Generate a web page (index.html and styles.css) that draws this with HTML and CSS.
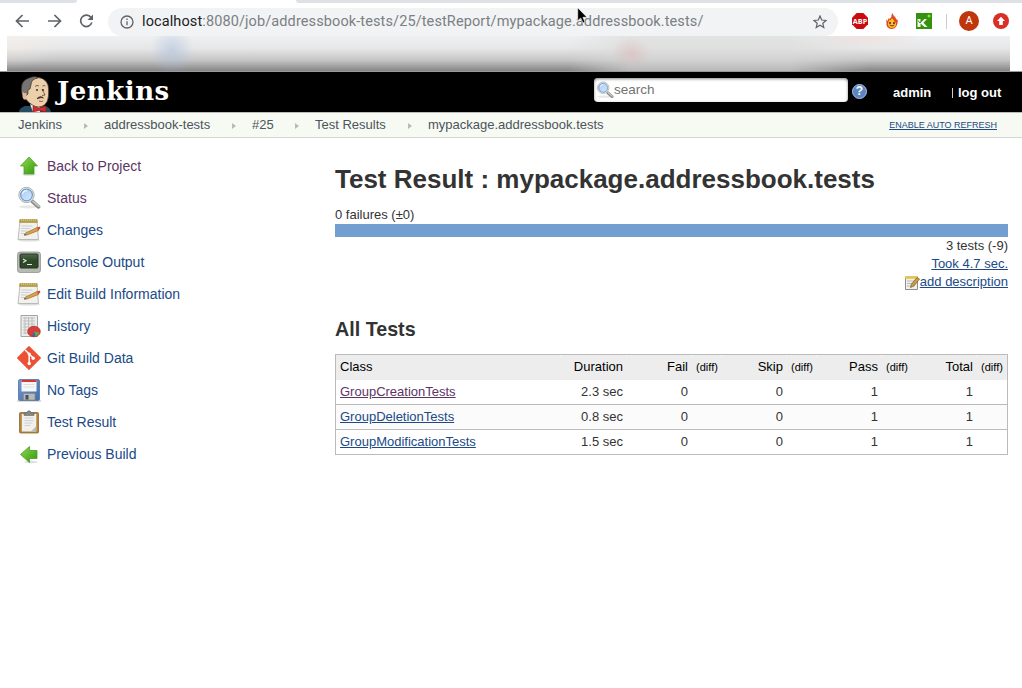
FILE: index.html
```html
<!DOCTYPE html>
<html lang="en">
<head>
<meta charset="utf-8">
<title>mypackage.addressbook.tests [Jenkins]</title>
<link rel="stylesheet" href="styles.css">
</head>
<body>
<svg class="defs" width="0" height="0" aria-hidden="true">
  <defs>
    <linearGradient id="green" x1="0" y1="0" x2="1" y2="1"><stop offset="0" stop-color="#8fdd4f"/><stop offset="1" stop-color="#35940f"/></linearGradient>
    <linearGradient id="lens" x1="0" y1="0" x2="1" y2="1"><stop offset="0" stop-color="#a5c9f2"/><stop offset="1" stop-color="#d9e9fb"/></linearGradient>
    <linearGradient id="screen" x1="0" y1="0" x2="0" y2="1"><stop offset="0" stop-color="#51694b"/><stop offset=".5" stop-color="#2c4629"/><stop offset="1" stop-color="#2d4a28"/></linearGradient>
    <linearGradient id="disk" x1="0" y1="0" x2="1" y2="1"><stop offset="0" stop-color="#7198d3"/><stop offset="1" stop-color="#426fae"/></linearGradient>
    <symbol id="notepad" viewBox="0 0 24 24">
      <ellipse cx="12" cy="22.300" rx="11" ry="1.300" fill="#ddd"/>
      <path d="M3 3h17l1.500 18.500H1z" fill="#f1f1ee" stroke="#a3a39f" stroke-width=".7"/>
      <path d="M2.700 1.500h17.500v3H2.700z" fill="#b8a044" stroke="#958032" stroke-width=".5"/>
      <path d="M4 2.200h16" stroke="#e1d07c" stroke-dasharray="1 1"/>
      <path d="M4.500 8h11M4.300 10.500h9M4 13h7M4 15.500h4" stroke="#c6c6c4" stroke-width=".8"/>
      <path d="M8.500 15l11.500-5.500 1.500 3-11.500 4.500-2.500.3z" fill="#d9a14c" stroke="#8d6329" stroke-width=".6"/>
      <path d="M20 9.500l2.500-1 1 1.500-2 2.500z" fill="#d54d36"/>
      <path d="M7 17.300l.9-1.400 1.100 1.200z" fill="#333"/>
    </symbol>
    <symbol id="magnifier" viewBox="0 0 24 24">
      <ellipse cx="11" cy="20.800" rx="9" ry="1.600" fill="#e8e8e8"/>
      <path d="M15.500 15.500l6 5.300" stroke="#8b8d8a" stroke-width="3.800" stroke-linecap="round"/>
      <path d="M16 15.300l6 5" stroke="#c9cbc8" stroke-width="1.500" stroke-linecap="round"/>
      <circle cx="9.500" cy="9" r="7.700" fill="#e9e9e7" stroke="#b1b3af"/>
      <circle cx="9.500" cy="9" r="5.900" fill="url(#lens)" stroke="#729bd0" stroke-width="1.200"/>
      <path d="M5.500 8q1-3.500 4.500-3.500" fill="none" stroke="#e9f3ff" stroke-width="1.300"/>
    </symbol>
  </defs>
</svg>

<div class="tabs"><i class="tab-left"></i><i class="tab-right"></i></div>
<div class="toolbar">
  <svg class="nav" viewBox="0 0 112 33" fill="none" stroke="#5f6368" stroke-width="1.700">
    <path d="M29 18H17M22.500 12l-6 6 6 6M48 18h12M54.500 12l6 6-6 6"/>
    <path d="M91 14.500a5.700 5.700 0 1 0 .8 5"/><path d="M93 11.500v5.500h-5.500z" fill="#5f6368" stroke="none"/>
  </svg>
  <div class="address">
    <svg class="info" viewBox="0 0 14 14" fill="none" stroke="#5f6368" stroke-width="1.300"><circle cx="7" cy="7" r="6"/><path d="M7 6.300v4M7 3.500V5"/></svg>
    <span class="url"><b>localhost</b>:8080/job/addressbook-tests/25/testReport/mypackage.addressbook.tests/</span>
    <svg class="star" viewBox="0 0 14 14" fill="none" stroke="#5f6368" stroke-width="1.200"><path d="M7 1l1.700 4 4.400.4-3.300 2.900 1 4.300L7 10.300l-3.800 2.300 1-4.300L.9 5.400 5.300 5z"/></svg>
  </div>
  <div class="extensions">
    <svg class="ext abp" viewBox="0 0 16 16"><path d="M4.700 0h6.600L16 4.700v6.600L11.300 16H4.700L0 11.300V4.700z" fill="#c90d0d"/><text x="8" y="10.700" class="abp-text">ABP</text></svg>
    <svg class="ext flame" viewBox="0 0 16 16"><path d="M8 0q2 2 2 4l1-1q0 2 2 4l.8-.4Q14 15.500 8 16 1.500 15.500 2.500 9L2 6.500 4 8q-.3-2 1-3l.5 1.200Q8 4 8 0z" fill="#de481d"/><path d="M4 10l1.500-3.500 1 1L8 5l3 4 1 1q.5 4.500-4 5-4.500-.5-4-5z" fill="#ffbd2b"/><circle cx="6" cy="10" r="1" fill="#622"/><circle cx="10" cy="10" r="1" fill="#622"/><path d="M5.700 12q2.300 2 4.600 0" fill="none" stroke="#723018"/></svg>
    <svg class="ext katalon" viewBox="0 0 16 16"><path fill="#36910f" d="M0 0h16v16H0z"/><path d="M1.500 6h3v3.500L8.500 6H11L7.500 9.700 11.500 14h-3l-4-3.500V14h-3z" fill="#f5faef"/><path d="M2 7.500l2 2.500 4-5" stroke="#36910f" fill="none"/><circle cx="13" cy="3" r="1.500" fill="#7dec2a"/></svg>
    <i class="divider"></i>
    <span class="avatar">A</span>
    <svg class="update" viewBox="0 0 16 16"><circle cx="8" cy="8" r="8" fill="#d92f25"/><path d="M8 3.800l4 4.200H9.800v4H6.200V8H4z" fill="#fff"/></svg>
  </div>
  <svg class="cursor" viewBox="0 0 10 17"><path d="M.7.700v13l3-2.700 2.300 5 2-1-2.100-4.700H10z" fill="#000" stroke="#fff" stroke-width=".6"/></svg>
</div>
<div class="bookmarks"></div>

<header class="header">
  <svg class="butler" viewBox="0 0 36 36">
    <path d="M1 36q0-4 6-6l20 0q5 1 6 6z" fill="#294b60"/>
    <path d="M12 28l10 3v5h-7z" fill="#eee"/>
    <path d="M5 18Q2 4 14 1.500 27 0 30 9q1 4 .5 11-.5 6-4 9-6 4-12 0-7-4-9.500-11z" fill="#ecd0ac" stroke="#41342c" stroke-width=".7"/>
    <path d="M4 18Q1 5 11 2q7-3 9 0-7 1-7 7l-1 4-2 1v4l-2 2q-3 1-4-2z" fill="#77736e" stroke="#2b2827" stroke-width=".6"/>
    <path d="M4.500 15q1 3 4 2v6q-3 2-4-2z" fill="#e3bc95"/>
    <path d="M17 10.500q2-2 4-.5M24.500 10q2-1 3 0M24 13q2 4 3 6l-3 .5" fill="none" stroke="#5c4537" stroke-width=".8"/>
    <circle cx="19" cy="14" r=".9" fill="#222"/><circle cx="25" cy="14" r=".9" fill="#222"/>
    <path d="M19 22q3-3 6-1l1 1.500-3-.4-4 1.200z" fill="#4d3930"/><path d="M21 25q3 1 4 0" stroke="#9d4d42" fill="none"/>
    <path d="M15 30l6 2L28 30v6l-7-1.500L15 36z" fill="#d12b2a" stroke="#821b1c" stroke-width=".6"/>
  </svg>
  <span class="brand">Jenkins</span>
  <div class="search"><svg viewBox="0 0 24 24"><use href="#magnifier"/></svg><span>search</span></div>
  <span class="help">?</span>
  <span class="admin">admin</span>
  <span class="logout"><i></i>log out</span>
</header>
<nav class="breadcrumbs">
  <span class="c1">Jenkins</span><i></i><span class="c2">addressbook-tests</span><i></i><span class="c3">#25</span><i></i><span class="c4">Test Results</span><i></i><span class="c5">mypackage.addressbook.tests</span>
  <a class="refresh">ENABLE AUTO REFRESH</a>
</nav>
<div class="page">
  <aside class="tasks">
    <a class="visited"><svg viewBox="0 0 24 24"><ellipse cx="12" cy="20.500" rx="7" ry="1.300" fill="#ddd"/><path d="M12 3l8.500 9H17v8H7v-8H3.500z" fill="url(#green)" stroke="#49a327" stroke-width=".8"/></svg><span>Back to Project</span></a>
    <a class="visited"><svg viewBox="0 0 24 24"><use href="#magnifier"/></svg><span>Status</span></a>
    <a><svg viewBox="0 0 24 24"><use href="#notepad"/></svg><span>Changes</span></a>
    <a><svg viewBox="0 0 24 24"><rect x=".5" y="2" width="23" height="20.500" rx="2.500" fill="#b8bbb5" stroke="#92948f" stroke-width=".8"/><rect x="3" y="4" width="18" height="14" rx="1" fill="url(#screen)" stroke="#263422"/><path d="M6 9l3 1.700L6 12.400M10 14.500h5" fill="none" stroke="#e3eddb" stroke-width="1.100"/><path d="M16 20h2" stroke="#8ed151"/></svg><span>Console Output</span></a>
    <a><svg viewBox="0 0 24 24"><use href="#notepad"/></svg><span>Edit Build Information</span></a>
    <a><svg viewBox="0 0 24 24"><path d="M4 1.500h16.500v21H4z" fill="#ececea" stroke="#a4a4a1"/><path d="M6 4h12M6 7h12M6 10h12M6 13h12M6 16h12M6 19h12M8 3v17M11.500 3v17M15 3v17" stroke="#b6b6b4" stroke-width=".8"/><ellipse cx="17" cy="17.500" rx="6.300" ry="5.300" fill="#d93e3b" stroke="#a62729" stroke-width=".7"/><path d="M17 17.500l5.500 1q-1 3-4 4z" fill="#5fae3d"/><path d="M17 17.500l1.500 5q-2 .3-3.500-.3z" fill="#3d62b4"/></svg><span>History</span></a>
    <a><svg viewBox="0 0 24 24"><path d="M12 .7L23.300 12 12 23.300.7 12z" fill="#ed5135" stroke="#ed5135" stroke-width="1.300" stroke-linejoin="round"/><path d="M8.200 4l4 4v10M12.200 8l4 4" stroke="#fff" stroke-width="1.500" fill="none"/><circle cx="12.200" cy="8" r="1.600" fill="#fff"/><circle cx="12.200" cy="17.500" r="1.700" fill="#fff"/><circle cx="16.200" cy="12.200" r="1.700" fill="#fff"/></svg><span>Git Build Data</span></a>
    <a><svg viewBox="0 0 24 24"><path d="M0 22h24v2H0z" fill="#ddd"/><rect x="1.500" y="1.500" width="21" height="21" rx="1.500" fill="url(#disk)" stroke="#5272a0" stroke-width=".8"/><path d="M4.500 2h15v11.500h-15z" fill="#f7f7f7"/><path d="M4.500 2h15v2h-15z" fill="#d73731"/><path d="M6.500 6.500h11M6.500 9h11" stroke="#ddd"/><path d="M6.500 15.500H18V22H6.500z" fill="#b7bab6" stroke="#888" stroke-width=".7"/><path d="M8.500 17h3v4.500h-3z" fill="#49505c"/></svg><span>No Tags</span></a>
    <a><svg viewBox="0 0 24 24"><rect x="2.500" y="2.500" width="19" height="20.500" rx="1" fill="#b58339" stroke="#8c6930" stroke-width=".8"/><path d="M4.800 4h14.500v17.500H4.800z" fill="#f0f0ee"/><path d="M7.500 8h9M7.500 10.500h9M7.500 13h8M7.500 15.500h6" stroke="#c6c6c6" stroke-width=".8"/><path d="M14 21.500l5-5v5z" fill="#bababa"/><path d="M7 5.500V3h3q0-2.300 2-2.300T14 3h3v2.500z" fill="#858985" stroke="#646764" stroke-width=".6"/></svg><span>Test Result</span></a>
    <a><svg viewBox="0 0 24 24"><ellipse cx="14" cy="20" rx="7" ry="1.200" fill="#ddd"/><path d="M3.500 12.500l9-8v4H20v8h-7.500v4z" fill="url(#green)" stroke="#479d2b" stroke-width=".8"/></svg><span>Previous Build</span></a>
  </aside>
  <main>
    <h1>Test Result : mypackage.addressbook.tests</h1>
    <div class="failures">0 failures (±0)</div>
    <div class="bar"></div>
    <div class="summary"><div>3 tests (-9)</div><div><a>Took 4.7 sec.</a></div><div><svg viewBox="0 0 16 16"><path d="M1.500 2h12v12.500h-12z" fill="#efefeb" stroke="#8e8e87"/><path d="M1 1.300h13v2.500H1z" fill="#e8c34b"/><path d="M3 6h8M3 8.500h6M3 11h4" stroke="#bbb"/><path d="M6.500 12.500l1-3.500 5.500-6.500 2.500 1.500L10 11z" fill="#c99b46" stroke="#765c2c" stroke-width=".7"/></svg><a>add description</a></div></div>
    <h2>All Tests</h2>
    <table>
      <colgroup><col class="name"><col class="duration"><col class="count"><col class="diff"><col class="count"><col class="diff"><col class="count"><col class="diff"><col class="count"><col class="diff"></colgroup>
      <thead><tr><th>Class</th><th>Duration</th><th>Fail</th><th>(diff)</th><th>Skip</th><th>(diff)</th><th>Pass</th><th>(diff)</th><th>Total</th><th>(diff)</th></tr></thead>
      <tbody>
        <tr><td><a class="visited">GroupCreationTests</a></td><td>2.3 sec</td><td>0</td><td></td><td>0</td><td></td><td>1</td><td></td><td>1</td><td></td></tr>
        <tr><td><a>GroupDeletionTests</a></td><td>0.8 sec</td><td>0</td><td></td><td>0</td><td></td><td>1</td><td></td><td>1</td><td></td></tr>
        <tr><td><a>GroupModificationTests</a></td><td>1.5 sec</td><td>0</td><td></td><td>0</td><td></td><td>1</td><td></td><td>1</td><td></td></tr>
      </tbody>
    </table>
  </main>
</div>
</body>
</html>
```

FILE: styles.css
```css
* { box-sizing: border-box; }
body { margin: 0; width: 1022px; height: 688px; overflow: hidden; background: #fff; color: #333; font: 13px/18px "Liberation Sans", Arial, sans-serif; }
svg { display: block; flex: none; }
.defs { position: absolute; }
.tabs { height: 3px; display: flex; justify-content: space-between; background: #fff; }
.tabs i { background: #dee1e6; height: 3px; }
.tab-left { width: 77px; border-bottom-right-radius: 4px; }
.tab-right { width: 726px; border-bottom-left-radius: 4px; }
.toolbar { position: relative; height: 33px; display: flex; align-items: center; }
.nav { width: 112px; height: 33px; margin-right: -4px; }
.address { width: 730px; height: 28px; margin-top: 4px; border-radius: 14px; background: #f1f3f4; display: flex; align-items: center; padding: 0 11px 0 12px; }
.info { width: 14px; height: 14px; }
.url { margin-left: 8px; font: 14.500px/20px Roboto, sans-serif; letter-spacing: .11px; color: #7b8085; white-space: nowrap; }
.url b { font-weight: 400; color: #202124; }
.star { width: 14px; height: 14px; margin-left: auto; }
.extensions { display: flex; align-items: center; margin: 3px 0 0 14px; height: 28px; }
.ext { width: 16px; height: 16px; margin-right: 16px; }
.abp-text { font: bold 7.200px "Open Sans", sans-serif; fill: #fff; text-anchor: middle; }
.divider { width: 1px; height: 15px; background: #ccc; margin-left: -2px; }
.avatar { width: 20px; height: 20px; border-radius: 50%; background: #bf360c; color: #fff; font: 11px/20px Roboto, sans-serif; text-align: center; margin: 0 14px 0 12px; }
.update { width: 16px; height: 16px; }
.cursor { position: absolute; width: 10px; height: 17px; left: 577px; top: 4px; }
.bookmarks { width: 1003px; height: 35px; margin-left: 7px;
  background: radial-gradient(ellipse 22px 24px at 165px 14px, #a9bedd88, transparent), radial-gradient(ellipse 20px 16px at 624px 17px, #dda39f55, transparent), radial-gradient(ellipse 55px 12px at 860px 0, #f0cdc566, transparent), radial-gradient(ellipse 60px 30px at 0 3px, #f8efe688, transparent), linear-gradient(90deg, #d7d7d700 0 56%, #dadada99 62% 78%, #d7d7d700 86%), linear-gradient(#eef0f1 0%, #e7e7e8 35%, #c7c7c8 68%, #89898a 98%); }
.header { height: 41px; background: #000; display: flex; align-items: center; color: #fff; border-top: 1px solid #999; }
.butler { width: 36px; height: 36px; margin: 4px 0 0 18px; align-self: flex-start; }
.brand { width: 538px; margin: -3px 0 0 3px; font: bold 26px/34px "DejaVu Serif", serif; letter-spacing: .5px; }
.search { width: 254px; height: 24px; margin: -4px 0 0 -1px; border-radius: 4px; background: #fff; box-shadow: inset 0 1px 3px #888; display: flex; align-items: center; color: #737373; font-size: 13.500px; }
.search svg { width: 18px; height: 18px; margin-left: 2px; }
.help { width: 15px; height: 15px; border-radius: 50%; background: #5d85c1; border: 1px solid #a9c2e7; color: #fff; font: bold 12px/13px "Liberation Sans", sans-serif; text-align: center; margin: -2px 26px 0 4px; }
.admin, .logout { font-weight: bold; font-size: 13px; margin-top: 1px; }
.admin { width: 59px; }
.logout { display: flex; align-items: center; gap: 5px; white-space: nowrap; }
.logout i { width: 1px; height: 10px; background: #ccc; }
.breadcrumbs { height: 26px; padding: 0 25px 0 18px; display: flex; align-items: center; background: #f6faf2; border-top: 1px solid #bbb; border-bottom: 1px solid #d3d7cf; color: #4d545d; white-space: nowrap; }
.breadcrumbs i { border-left: 4px solid #b8bab5; border-top: 3.500px solid transparent; border-bottom: 3.500px solid transparent; margin-top: 1px; }
.c1 { width: 66px; } .c2 { width: 128px; margin-left: 16px; } .c3 { width: 43px; margin-left: 16px; } .c4 { width: 93px; margin-left: 16px; } .c5 { margin-left: 16px; }
.refresh { margin-left: auto; font-size: 9px; }
a { color: #204a87; text-decoration: underline; text-underline-offset: 1px; }
.visited { color: #5c3566; }
.page { display: flex; }
.tasks { width: 335px; padding: 12px 0 0 17px; display: flex; flex-direction: column; }
.tasks a { height: 32px; display: flex; align-items: center; gap: 6px; text-decoration: none; font-size: 14px; }
.tasks svg { width: 24px; height: 24px; }
main { width: 673px; padding-top: 25px; }
h1 { margin: 0; font-size: 26px; line-height: 32px; white-space: nowrap; }
.failures { margin-top: 11px; }
.bar { height: 13px; background: #729fcf; }
.summary { display: flex; flex-direction: column; align-items: flex-end; }
.summary div { display: flex; height: 18px; }
.summary svg { width: 16px; height: 16px; margin-top: 2px; }
h2 { font-size: 19.700px; line-height: 24px; margin: 26px 0 13px; }
table { width: 673px; table-layout: fixed; border-collapse: separate; border-spacing: 0; border: 1px solid #bbb; border-bottom: 0; }
.name { width: 225px; } .duration { width: 66px; } .count { width: 65px; } .diff { width: 30px; }
th, td { height: 25px; padding: 0 4px; line-height: 18px; text-align: right; font-weight: 400; }
th { padding-bottom: 1px; color: #000; background: linear-gradient(#fff, #fff) 100% 0 / 1px 1px no-repeat #ededed; }
th:first-child, td:first-child { text-align: left; }
th:nth-child(n+4):nth-child(even) { font-size: 11px; padding: 0 0 1px; text-align: center; }
td { border-bottom: 1px solid #bbb; }
tbody tr:nth-child(even) { background: #fbfbfb; }
```
